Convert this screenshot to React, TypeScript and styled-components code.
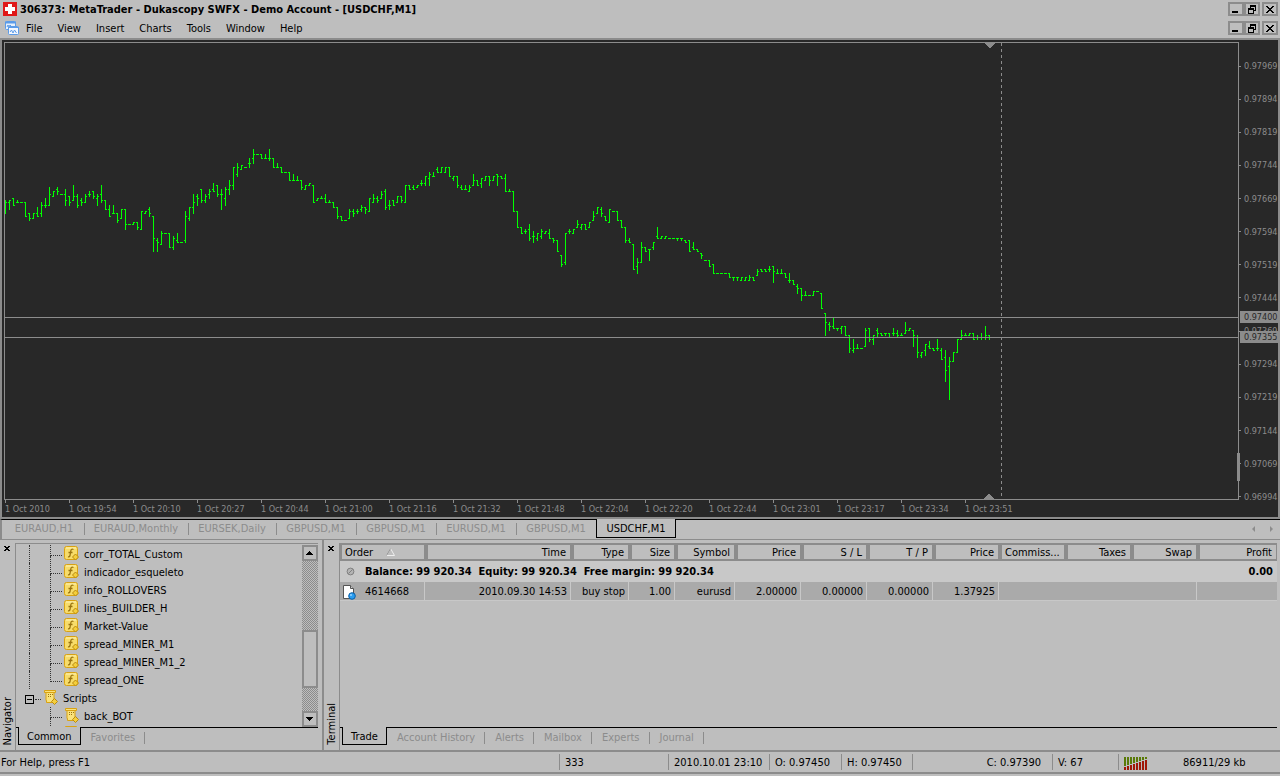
import React from "react";
import styled, { createGlobalStyle } from "styled-components";

const FACE = "#bebebe";
const EDGE = "#8c8c8c";
const DARK = "#282828";
const AXIS = "#8c8c8c";
const LIME = "#00ff00";

const GlobalStyle = createGlobalStyle`
  * { box-sizing: border-box; }
  body {
    margin: 0;
    background: ${FACE};
    color: #000;
    font: 11px/14px "DejaVu Sans Condensed", Tahoma, sans-serif;
  }
  button {
    font: inherit;
    color: inherit;
    background: none;
    border: 0;
    padding: 0;
    white-space: nowrap;
  }
  ul { list-style: none; margin: 0; padding: 0; }
`;

const Page = styled.div`
  min-height: 100vh;
  display: flex;
  flex-direction: column;
  overflow: hidden;
`;

/* ---------- title and menu ---------- */

const TitleBar = styled.header`
  display: flex;
  align-items: center;
  height: 18px;
  padding: 0 2px 0 3px;
  gap: 3px;
`;

const Title = styled.h1`
  flex: 1;
  margin: 0;
  padding-top: 2px;
  font: bold 11px/14px "DejaVu Sans Condensed", Tahoma, sans-serif;
  white-space: nowrap;
`;

const MenuBar = styled.nav`
  display: flex;
  align-items: center;
  height: 20px;
  padding: 0 2px 0 5px;
`;

const MenuItems = styled.div`
  flex: 1;
  display: flex;
  padding: 2px 0 0 7px;
  gap: 15px;
`;

const WindowButtons = styled.div`
  display: flex;
`;

const WindowButton = styled.button<{ $apart?: boolean }>`
  width: 16px;
  height: 14px;
  border: 2px solid ${EDGE};
  margin-left: ${(p) => (p.$apart ? "2px" : "0")};
  display: flex;
  align-items: center;
  justify-content: center;
`;

/* ---------- chart ---------- */

const ChartFrame = styled.main`
  flex: 1;
  display: flex;
  flex-direction: column;
  background: ${DARK};
  border: 2px solid ${EDGE};
  padding: 2px 0 0 2px;
  color: ${AXIS};
  font: 9px/12px "DejaVu Sans Condensed", Tahoma, sans-serif;
`;

const PlotRow = styled.div`
  flex: 1;
  display: flex;
  min-height: 458px;
`;

const Plot = styled.svg`
  flex: 1;
  min-width: 0;
  height: auto;
  border: 1px solid ${AXIS};
`;

const PriceAxis = styled.div`
  position: relative;
  width: 39px;
  padding: 18px 0 0;
  margin-bottom: -3px;
  display: flex;
  flex-direction: column;
  justify-content: space-between;
`;

const PriceLabel = styled.span`
  display: flex;
  align-items: center;
  gap: 3px;
  &::before {
    content: "";
    flex: none;
    width: 2px;
    height: 1px;
    background: ${AXIS};
  }
`;

const PriceTag = styled.span<{ $top: number }>`
  position: absolute;
  left: 1px;
  right: 0;
  top: ${(p) => p.$top}px;
  height: 12px;
  padding-left: 4px;
  line-height: 12px;
  background: ${AXIS};
  color: ${DARK};
`;

const AxisThumb = styled.span`
  position: absolute;
  left: -2px;
  top: 411px;
  width: 3px;
  height: 28px;
  background: ${AXIS};
`;

const TimeAxis = styled.div`
  display: flex;
  height: 17px;
  overflow: hidden;
  padding-left: 1px;
`;

const TimeLabel = styled.span`
  flex: 0 0 64px;
  white-space: nowrap;
  &::before {
    content: "";
    display: block;
    width: 1px;
    height: 3px;
    background: ${AXIS};
  }
`;

/* ---------- tabs ---------- */

const ChartTabs = styled.div`
  display: flex;
  height: 21px;
  border-top: 1px solid #000;
  border-bottom: 1px solid ${EDGE};
  border-left: 2px solid ${EDGE};
  padding-left: 2px;
  margin-bottom: 3px;
`;

const ChartTab = styled.button<{ $w: number; $active?: boolean }>`
  position: relative;
  width: ${(p) => p.$w}px;
  height: ${(p) => (p.$active ? "19px" : "17px")};
  margin-top: ${(p) => (p.$active ? "-1px" : "0")};
  padding-top: ${(p) => (p.$active ? "2px" : "0")};
  color: ${(p) => (p.$active ? "#000" : EDGE)};
  background: ${FACE};
  border: ${(p) => (p.$active ? "1px solid #000" : "0")};
  border-top: 0;
  &::after {
    content: "";
    position: absolute;
    left: 100%;
    top: 3px;
    height: 12px;
    width: ${(p) => (p.$active ? "0" : "1px")};
    background: ${EDGE};
    z-index: 1;
  }
  &:nth-last-child(3)::after { display: none; }
`;

const Arrows = styled.div`
  margin-left: auto;
  display: flex;
  gap: 14px;
  padding: 6px 6px 0 0;
`;

const PanelTabs = styled.div`
  display: flex;
  height: 23px;
  padding-left: 2px;
  border-top: 1px solid #000;
`;

const PanelTab = styled.button<{ $active?: boolean }>`
  height: 18px;
  margin-top: ${(p) => (p.$active ? "-1px" : "1px")};
  padding: ${(p) => (p.$active ? "2px 8px 0" : "0 10px")};
  position: relative;
  color: ${(p) => (p.$active ? "#000" : EDGE)};
  background: ${FACE};
  border: ${(p) => (p.$active ? "1px solid #000" : "0")};
  border-top: 0;
  &::after {
    content: "";
    position: absolute;
    right: 0;
    top: 3px;
    width: ${(p) => (p.$active ? "0" : "1px")};
    height: 12px;
    background: ${EDGE};
  }
`;

/* ---------- docked panels ---------- */

const Panels = styled.div`
  display: flex;
  height: 207px;
`;

const Dock = styled.section<{ $w?: number }>`
  display: flex;
  flex: ${(p) => (p.$w ? `0 0 ${p.$w}px` : "1")};
  min-width: 0;
  padding-right: ${(p) => (p.$w ? "4px" : "3px")};
  border-right: ${(p) => (p.$w ? `2px solid ${EDGE}` : "0")};
  margin-top: -3px;
  padding-top: 3px;
`;

const Caption = styled.div`
  width: 15px;
  display: flex;
  flex-direction: column;
  align-items: center;
  justify-content: space-between;
  padding: 3px 0 5px 0;
`;

const CloseDock = styled.button`
  width: 7px;
  height: 6px;
  display: flex;
`;

const CaptionText = styled.h2`
  margin: 0;
  font: inherit;
  writing-mode: vertical-rl;
  transform: rotate(180deg);
`;

const DockBody = styled.div`
  flex: 1;
  min-width: 0;
  display: flex;
  flex-direction: column;
  border-left: 1px solid ${EDGE};
  border-top: 1px solid ${EDGE};
`;

const TreeArea = styled.div`
  display: flex;
  flex: 1;
  min-height: 0;
`;

const Tree = styled.ul`
  flex: 1;
  overflow: hidden;
  padding: 1px 0 0 13px;
`;

const TreeRow = styled.li`
  display: flex;
  height: 18px;
  white-space: nowrap;
`;

const Trunk = styled.span<{ $drawn?: boolean }>`
  width: 21px;
  border-left: 1px ${(p) => (p.$drawn ? "dotted #333" : "solid transparent")};
`;

const Branch = styled.span<{ $last?: boolean }>`
  width: 14px;
  &::before {
    content: "";
    display: block;
    width: 11px;
    height: 10px;
    border-left: 1px dotted #333;
    border-bottom: 1px dotted #333;
  }
  &::after {
    content: "";
    display: block;
    height: 8px;
    border-left: 1px dotted ${(p) => (p.$last ? "transparent" : "#333")};
  }
`;

const Label = styled.span`
  padding-left: 5px;
  line-height: 20px;
`;

const Expander = styled.button`
  width: 9px;
  height: 9px;
  margin: 6px 0 0 -4px;
  border: 1px solid #000;
  display: flex;
  align-items: center;
  justify-content: center;
  &::before {
    content: "";
    width: 5px;
    height: 1px;
    background: #000;
  }
`;

const Stub = styled.span`
  width: 6px;
  height: 11px;
  margin: 0 2px 0 1px;
  border-bottom: 1px dotted #333;
`;

const ScrollBar = styled.div`
  width: 16px;
  margin-top: 1px;
  display: flex;
  flex-direction: column;
  background: repeating-conic-gradient(${EDGE} 0 25%, ${FACE} 0 50%) 0 0 / 2px 2px;
`;

const ScrollButton = styled.button`
  height: 16px;
  border: 2px solid ${EDGE};
  background: ${FACE};
  display: flex;
  align-items: center;
  justify-content: center;
`;

const ScrollThumb = styled.div`
  height: 58px;
  margin: auto 0 23px;
  border: 2px solid ${EDGE};
  background: ${FACE};
`;

/* ---------- trade table ---------- */

const Fill = styled.div`
  flex: 1;
  min-height: 0;
  overflow: hidden;
`;

const Table = styled.table`
  width: 100%;
  table-layout: fixed;
  border-collapse: separate;
  border-spacing: 0;
  line-height: 14px;
  white-space: nowrap;
`;

const Col = styled.col<{ $w?: number }>`
  width: ${(p) => (p.$w ? `${p.$w}px` : "auto")};
`;

const Th = styled.th<{ $left?: boolean }>`
  height: 17px;
  padding: 1px 4px 0 3px;
  line-height: 13px;
  font-weight: normal;
  text-align: ${(p) => (p.$left ? "left" : "right")};
  border: solid ${EDGE};
  border-width: 1px 1px 2px 3px;
  &:first-child { border-left-width: 2px; }
`;

const SortMark = styled.svg`
  margin-left: 13px;
`;

const BalanceCell = styled.td<{ $right?: boolean }>`
  height: 21px;
  background: #c8c8c8;
  font-weight: bold;
  padding: 0 4px 0 6px;
  text-align: ${(p) => (p.$right ? "right" : "left")};
`;

const Td = styled.td<{ $plain?: boolean }>`
  height: 19px;
  background: #aaaaaa;
  padding: 2px 3px 0 2px;
  text-align: right;
  border-bottom: 1px solid #c8c8c8;
  border-right: ${(p) => (p.$plain ? "0" : "1px solid #c8c8c8")};
`;

const CellLine = styled.div<{ $gap: number }>`
  display: flex;
  align-items: center;
  gap: ${(p) => p.$gap}px;
`;

/* ---------- status bar ---------- */

const StatusBar = styled.footer`
  display: flex;
  align-items: center;
  height: 24px;
  border: solid ${EDGE};
  border-width: 2px 0;
  margin-bottom: 2px;
`;

const StatusCell = styled.div<{ $w?: number; $align?: string }>`
  flex: ${(p) => (p.$w ? `0 0 ${p.$w}px` : "1")};
  min-width: 0;
  height: 16px;
  display: flex;
  align-items: center;
  justify-content: ${(p) => p.$align || "flex-start"};
  padding: 2px 11px 0 5px;
  white-space: nowrap;
  border-left: 1px solid ${EDGE};
  &:first-child { border-left: 0; padding-left: 1px; }
`;

const Traffic = styled.svg`
  margin-right: 36px;
`;

/* ---------- data ---------- */

/* one bar per minute: open, high, low, close as rows of the plot */
const BARS = `
202 200 213 202;202 200 209 200;198 198 205 205;202 200 202 202;202 202 202 202;202 202 216 216;213 213 220 218;218 213 218 213;
213 207 216 216;213 202 216 205;205 198 207 205;205 187 205 194;196 191 196 191;189 187 194 191;194 194 194 194;194 189 205 200;
196 196 205 202;200 185 200 196;196 194 207 205;200 198 205 202;202 194 202 196;194 191 196 194;191 191 198 196;198 194 205 196;
194 185 202 200;200 200 209 209;209 205 216 216;213 205 213 213;213 213 222 220;218 209 218 209;209 209 229 224;224 224 224 224;
224 222 224 222;222 222 229 227;229 211 229 211;213 211 213 211;209 207 216 213;216 216 251 238;240 238 251 242;244 231 244 233;
233 233 233 233;233 233 247 247;247 236 249 238;240 233 242 242;242 242 242 242;240 211 242 216;218 207 220 207;207 194 213 202;
196 194 205 198;189 189 202 200;200 194 202 196;194 189 198 191;189 183 191 191;185 185 196 194;194 189 209 194;198 187 205 189;
189 180 194 185;185 167 189 167;174 163 176 167;169 165 169 165;167 167 167 167;163 158 167 163;158 149 163 154;154 154 154 154;
154 154 158 158;158 154 158 158;158 149 160 158;158 158 167 167;167 163 167 167;167 167 172 172;172 172 172 172;172 172 180 180;
180 174 180 180;180 176 180 180;180 180 189 187;189 185 189 185;185 183 185 183;185 185 202 202;200 198 200 198;198 196 198 198;
198 194 202 202;202 200 202 202;202 202 207 207;207 207 218 216;216 216 220 220;220 220 220 220;218 209 218 211;211 209 216 213;
211 209 213 211;209 205 211 207;207 207 213 209;211 198 211 198;202 194 202 198;198 196 202 200;198 191 198 194;191 189 209 207;
205 200 209 205;200 200 205 205;202 196 202 196;196 196 202 200;202 185 202 185;185 185 189 189;187 185 189 189;187 185 187 185;
183 180 185 183;183 176 185 176;178 172 185 174;176 172 176 176;169 167 172 172;172 167 172 167;172 167 172 167;167 167 176 176;
178 176 180 176;176 176 187 185;187 185 189 189;189 185 189 189;191 185 191 187;185 174 185 180;180 180 185 185;183 178 187 178;
180 176 180 176;176 176 185 180;180 176 180 176;174 174 185 176;176 176 178 178;178 174 191 191;191 189 191 191;191 191 211 211;
211 211 227 227;227 227 233 233;231 229 233 231;229 224 240 238;236 231 242 236;238 233 240 233;236 229 238 231;233 231 233 231;
233 229 238 238;238 238 242 240;240 240 251 251;255 255 266 264;262 233 264 233;231 229 233 231;233 229 233 229;227 220 227 224;
227 224 229 224;224 224 229 229;227 222 227 222;220 211 220 216;213 207 213 207;209 207 216 213;216 216 220 220;222 209 222 209;
211 211 211 211;211 211 220 220;220 220 227 227;227 227 242 240;240 238 242 242;244 244 269 269;266 258 273 262;262 242 262 247;
247 247 251 251;249 249 260 249;247 242 249 242;236 227 238 238;238 236 238 236;238 236 238 236;238 238 238 238;238 238 238 238;
238 238 240 238;238 238 240 238;240 240 242 242;240 240 251 251;247 242 249 249;249 249 251 251;253 253 258 255;260 260 260 260;
260 260 266 266;264 264 273 273;273 273 273 273;273 273 273 273;273 273 273 273;273 273 277 277;277 277 280 277;277 277 280 277;
280 277 280 277;280 277 280 277;280 275 280 277;277 277 280 280;275 269 275 271;269 269 271 271;269 269 271 271;269 266 271 269;
266 266 282 271;273 269 273 273;273 269 273 273;273 273 277 277;280 273 282 280;280 280 284 284;286 284 293 288;288 288 300 295;
295 291 295 295;295 295 295 295;295 291 295 291;291 291 291 291;293 293 308 308;313 313 335 322;324 322 330 326;326 317 328 328;
328 328 330 328;328 326 333 326;326 326 335 335;335 335 352 348;350 339 352 348;348 344 348 348;348 348 348 348;346 328 346 330;
328 328 341 339;339 335 344 335;330 328 337 333;333 333 335 335;333 333 335 333;333 333 337 337;333 328 335 333;333 330 337 335;
335 333 335 335;333 322 333 330;330 328 330 328;330 330 346 335;337 335 357 352;355 352 357 352;350 344 355 344;346 341 348 348;
348 348 350 350;348 339 350 348;350 348 359 359;357 350 381 370;366 357 399 361;361 352 361 352;352 339 352 339;339 330 339 335;
335 333 335 335;335 333 335 333;333 333 339 339;337 335 339 337;337 333 339 337;337 326 339 335;335 335 339 337`
  .split(";")
  .map((b) => b.trim().split(" ").map(Number));

const PLOT_TOP = 43;
const barPath = BARS.map(([o, h, l, c], i) => {
  const x = i * 4;
  const y = (v: number) => v - PLOT_TOP;
  return `M${x} ${y(h)}h1v${l - h + 1}h-1zM${x - 1} ${y(o)}h1v1h-1zM${x + 1} ${y(c)}h1v1h-1z`;
}).join("");

const PRICES = ["0.97969", "0.97894", "0.97819", "0.97744", "0.97669", "0.97594", "0.97519", "0.97444", "0.97369", "0.97294", "0.97219", "0.97144", "0.97069", "0.96994"];
const TIMES = ["1 Oct 2010", "1 Oct 19:54", "1 Oct 20:10", "1 Oct 20:27", "1 Oct 20:44", "1 Oct 21:00", "1 Oct 21:16", "1 Oct 21:32", "1 Oct 21:48", "1 Oct 22:04", "1 Oct 22:20", "1 Oct 22:44", "1 Oct 23:01", "1 Oct 23:17", "1 Oct 23:34", "1 Oct 23:51"];
const MENUS = ["File", "View", "Insert", "Charts", "Tools", "Window", "Help"];
const CHART_TABS: [string, number][] = [["EURAUD,H1", 80], ["EURAUD,Monthly", 104], ["EURSEK,Daily", 88], ["GBPUSD,M1", 80], ["GBPUSD,M1", 80], ["EURUSD,M1", 80], ["GBPUSD,M1", 80], ["USDCHF,M1", 80]];
const INDICATORS = ["corr_TOTAL_Custom", "indicador_esqueleto", "info_ROLLOVERS", "lines_BUILDER_H", "Market-Value", "spread_MINER_M1", "spread_MINER_M1_2", "spread_ONE"];
const COLUMNS: [string, number?][] = [["Order", 85], ["Time", 146], ["Type", 58], ["Size", 46], ["Symbol", 60], ["Price", 66], ["S / L", 66], ["T / P", 66], ["Price", 66], ["Commiss...", 66], ["Taxes", 66], ["Swap", 66], ["Profit"]];
const TERMINAL_TABS = ["Trade", "Account History", "Alerts", "Mailbox", "Experts", "Journal"];

/* ---------- icons ---------- */

const SwissIcon = () => (
  <svg width="14" height="14" shapeRendering="crispEdges">
    <rect width="14" height="14" fill="#e01818" />
    <path d="M5 2h4v3h3v4h-3v3h-4v-3h-3v-4h3z" fill="#fff" />
  </svg>
);

const ChartsIcon = () => (
  <svg width="14" height="14" viewBox="0 0 14 14" fill="none">
    <rect x="0.5" y="0.5" width="10" height="8" rx="1" fill="#e6f0fc" stroke="#5b9be8" />
    <path d="M0 1.5h11" stroke="#5b9be8" strokeWidth="2" />
    <path d="M2 6l1-2 1 2 1-2 1 1" stroke="#5b9be8" />
    <rect x="3.5" y="5.5" width="10" height="8" rx="1" fill="#f4f8ff" stroke="#5b9be8" />
    <path d="M3 6.5h11" stroke="#5b9be8" />
    <path d="M5 11l1.500-2 1.500 3 1.500-3 2 3" stroke="#5b9be8" />
  </svg>
);

const MinimizeGlyph = () => (
  <svg width="10" height="8" shapeRendering="crispEdges"><path d="M1 6h6v2h-6z" /></svg>
);

const RestoreGlyph = () => (
  <svg width="8" height="9" shapeRendering="crispEdges">
    <path d="M2 0h6v6h-2v-1h1v-3h-4v1h-1zM0 3h6v6h-6zM1 5v3h4v-3z" fillRule="evenodd" />
  </svg>
);

const CloseGlyph = () => (
  <svg width="8" height="7" shapeRendering="crispEdges">
    <path d="M0 0h2v1h1v1h2v-1h1v-1h2v1h-1v1h-1v1h-1v1h1v1h1v1h1v1h-2v-1h-1v-1h-2v1h-1v1h-2v-1h1v-1h1v-1h1v-1h-1v-1h-1v-1h-1z" />
  </svg>
);

const SmallClose = () => (
  <svg width="7" height="6" shapeRendering="crispEdges">
    <path d="M0 0h2v1h2v-1h2v1h-1v1h-1v1h1v1h1v1h-2v-1h-2v1h-2v-1h1v-1h1v-1h-1v-1h-1z" />
  </svg>
);

const Controls = () => (
  <WindowButtons>
    <WindowButton aria-label="Minimize"><MinimizeGlyph /></WindowButton>
    <WindowButton aria-label="Restore"><RestoreGlyph /></WindowButton>
    <WindowButton aria-label="Close" $apart><CloseGlyph /></WindowButton>
  </WindowButtons>
);

const IndicatorIcon = () => (
  <svg width="15" height="16" viewBox="0 0 15 16" fill="none">
    <rect x="0.5" y="1.500" width="13" height="13" rx="2" fill="#f7dc6a" stroke="#d9a212" />
    <path d="M2 3h10" stroke="#fdf3b8" />
    <path d="M9.500 4.500c-2-1-2.500 0-2.800 2l-.7 4c-.3 1.500-1 1.500-2 1.200M4.500 7.500h4" stroke="#9a7410" strokeWidth="1.300" />
    <path d="M11.500 9l3 3-3 3-3-3z" fill="#f5cf3c" stroke="#b98a10" />
  </svg>
);

const ScriptIcon = () => (
  <svg width="15" height="16" viewBox="0 0 15 16" fill="none">
    <path d="M1.500 1.500h11v2h-1.500v7.500h1.500v2.500h-9v-2h-.5v-8h-1.500z" fill="#f9e27c" stroke="#d9a212" />
    <path d="M2 3.500h10" stroke="#d9a212" />
    <path d="M5 5.500h1M7 5.500h1M9 5.500h1M5 7.500h1M7 7.500h1" stroke="#9a7410" />
    <path d="M11.500 9.500l3 3-3 3-3-3z" fill="#f5cf3c" stroke="#b98a10" />
  </svg>
);

const OrderIcon = () => (
  <svg width="14" height="15" viewBox="0 0 14 15">
    <path d="M1.500 .5h7l3 3v10h-10z" fill="#fff" stroke="#555" />
    <path d="M8.500 .5v3h3" fill="#ccc" stroke="#555" />
    <circle cx="10" cy="11" r="3.300" fill="#2a9df0" stroke="#0a5fa8" />
    <circle cx="9" cy="10" r="1" fill="#9ad4ff" />
  </svg>
);

const BalanceIcon = () => (
  <svg width="9" height="9" viewBox="0 0 9 9">
    <circle cx="4.500" cy="4.500" r="3.400" fill="#b4b4b4" stroke="#808080" />
    <path d="M2.500 6.500l4-4" stroke="#808080" />
  </svg>
);

const Triangle = ({ up }: { up?: boolean }) => (
  <svg width="8" height="4" shapeRendering="crispEdges">
    <path d={up ? "M3 0h1v1h1v1h1v1h1v1h-7v-1h1v-1h1v-1h1z" : "M0 0h7v1h-1v1h-1v1h-1v1h-1v-1h-1v-1h-1v-1h-1z"} />
  </svg>
);

const TrafficIcon = () => (
  <Traffic width="23" height="13" shapeRendering="crispEdges">
    {Array.from({ length: 8 }, (_, i) => (
      <React.Fragment key={i}>
        <rect x={i * 3} y="0" width="2" height={9 - i} fill="#5a7a08" />
        <rect x={i * 3} y={10 - i} width="2" height={3 + i} fill="#a01808" />
      </React.Fragment>
    ))}
  </Traffic>
);

export default function App() {
  return (
    <Page>
      <GlobalStyle />
      <TitleBar>
        <SwissIcon />
        <Title>306373: MetaTrader - Dukascopy SWFX - Demo Account - [USDCHF,M1]</Title>
        <Controls />
      </TitleBar>
      <MenuBar>
        <ChartsIcon />
        <MenuItems>
          {MENUS.map((m) => <button key={m}>{m}</button>)}
        </MenuItems>
        <Controls />
      </MenuBar>

      <ChartFrame>
        <PlotRow>
          <Plot shapeRendering="crispEdges" aria-label="USDCHF one minute bars">
            <path d="M996.500 0v2000" stroke={AXIS} strokeDasharray="3 3" />
            <path d={barPath} fill={LIME} />
            <path d="M0 274.500h3000M0 294.500h3000" stroke={AXIS} />
            <path d="M979 0h11l-5 5h-1zM983 451h1l5 5h-11z" fill={AXIS} />
          </Plot>
          <PriceAxis>
            {PRICES.map((p) => <PriceLabel key={p}>{p}</PriceLabel>)}
            <PriceTag $top={269}>0.97400</PriceTag>
            <PriceTag $top={289}>0.97355</PriceTag>
            <AxisThumb />
          </PriceAxis>
        </PlotRow>
        <TimeAxis>
          {TIMES.map((t) => <TimeLabel key={t}>{t}</TimeLabel>)}
        </TimeAxis>
      </ChartFrame>

      <ChartTabs>
        {CHART_TABS.map(([name, w], i) => (
          <ChartTab key={i} $w={w} $active={i === 7}>{name}</ChartTab>
        ))}
        <Arrows>
          <svg width="4" height="6"><path d="M3 0v6l-3-3z" fill={EDGE} /></svg>
          <svg width="4" height="6"><path d="M0 0v6l3-3z" fill={EDGE} /></svg>
        </Arrows>
      </ChartTabs>

      <Panels>
        <Dock $w={324}>
          <Caption>
            <CloseDock aria-label="Close navigator"><SmallClose /></CloseDock>
            <CaptionText>Navigator</CaptionText>
          </Caption>
          <DockBody>
            <TreeArea>
              <Tree>
                {INDICATORS.map((name, i) => (
                  <TreeRow key={name}>
                    <Trunk $drawn />
                    <Branch $last={i === INDICATORS.length - 1} />
                    <IndicatorIcon />
                    <Label>{name}</Label>
                  </TreeRow>
                ))}
                <TreeRow>
                  <Expander aria-label="Collapse scripts" />
                  <Stub />
                  <ScriptIcon />
                  <Label>Scripts</Label>
                </TreeRow>
                <TreeRow>
                  <Trunk />
                  <Branch />
                  <ScriptIcon />
                  <Label>back_BOT</Label>
                </TreeRow>
                <TreeRow>
                  <Trunk />
                  <Branch />
                  <ScriptIcon />
                </TreeRow>
              </Tree>
              <ScrollBar>
                <ScrollButton aria-label="Scroll up"><Triangle up /></ScrollButton>
                <ScrollThumb />
                <ScrollButton aria-label="Scroll down"><Triangle /></ScrollButton>
              </ScrollBar>
            </TreeArea>
            <PanelTabs>
              <PanelTab $active>Common</PanelTab>
              <PanelTab>Favorites</PanelTab>
            </PanelTabs>
          </DockBody>
        </Dock>

        <Dock>
          <Caption>
            <CloseDock aria-label="Close terminal"><SmallClose /></CloseDock>
            <CaptionText>Terminal</CaptionText>
          </Caption>
          <DockBody>
            <Fill>
              <Table>
                <colgroup>
                  {COLUMNS.map(([name, w], i) => <Col key={name + i} $w={w} />)}
                </colgroup>
                <thead>
                  <tr>
                    {COLUMNS.map(([name], i) => (
                      <Th key={name + i} $left={i === 0 || i === 9}>
                        {name}
                        {i === 0 && (
                          <SortMark width="9" height="8" viewBox="0 0 9 8">
                            <path d="M4.500 .5l-4 7h8z" fill="none" stroke="#eee" />
                            <path d="M4.500 .5l-4 7" stroke="#8c8c8c" />
                          </SortMark>
                        )}
                      </Th>
                    ))}
                  </tr>
                </thead>
                <tbody>
                  <tr>
                    <BalanceCell colSpan={12}>
                      <CellLine $gap={10}>
                        <BalanceIcon />
                        <span>Balance: 99 920.34&nbsp; Equity: 99 920.34&nbsp; Free margin: 99 920.34</span>
                      </CellLine>
                    </BalanceCell>
                    <BalanceCell $right>0.00</BalanceCell>
                  </tr>
                  <tr>
                    <Td>
                      <CellLine $gap={9}><OrderIcon />4614668</CellLine>
                    </Td>
                    <Td>2010.09.30 14:53</Td>
                    <Td>buy stop</Td>
                    <Td>1.00</Td>
                    <Td>eurusd</Td>
                    <Td>2.00000</Td>
                    <Td>0.00000</Td>
                    <Td>0.00000</Td>
                    <Td>1.37925</Td>
                    <Td $plain />
                    <Td $plain />
                    <Td />
                    <Td $plain />
                  </tr>
                </tbody>
              </Table>
            </Fill>
            <PanelTabs>
              {TERMINAL_TABS.map((t, i) => <PanelTab key={t} $active={i === 0}>{t}</PanelTab>)}
            </PanelTabs>
          </DockBody>
        </Dock>
      </Panels>

      <StatusBar>
        <StatusCell>For Help, press F1</StatusCell>
        <StatusCell $w={109}>333</StatusCell>
        <StatusCell $w={101}>2010.10.01 23:10</StatusCell>
        <StatusCell $w={72}>O: 0.97450</StatusCell>
        <StatusCell $w={71}>H: 0.97450</StatusCell>
        <StatusCell $w={140} $align="flex-end">C: 0.97390</StatusCell>
        <StatusCell $w={66}>V: 67</StatusCell>
        <StatusCell $w={162}><TrafficIcon />86911/29 kb</StatusCell>
      </StatusBar>
    </Page>
  );
}
